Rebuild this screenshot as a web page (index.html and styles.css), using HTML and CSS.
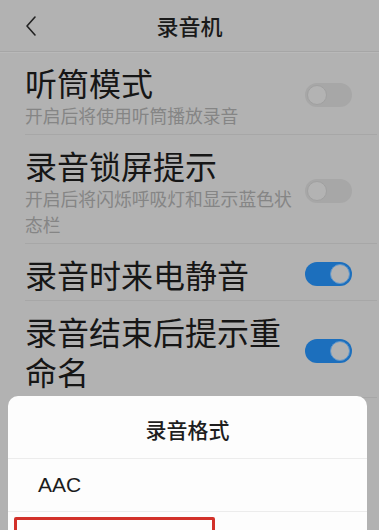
FILE: index.html
```html
<!DOCTYPE html>
<html lang="zh-CN">
<head>
<meta charset="utf-8">
<title>录音机</title>
<link rel="stylesheet" href="styles.css">
</head>
<body>
<div class="screen">
  <header class="topbar">
    <span class="back">
      <svg width="14" height="22" viewBox="0 0 14 22"><polyline points="10,2 2,11 10,20" fill="none" stroke="#222" stroke-width="1.6" stroke-linecap="round" stroke-linejoin="round"/></svg>
    </span>
    <h1 class="topbar-title">录音机</h1>
    <span></span>
  </header>
  <div class="list">
    <div class="row">
      <div class="text">
        <div class="title">听筒模式</div>
        <div class="sub">开启后将使用听筒播放录音</div>
      </div>
      <span class="switch"></span>
    </div>
    <div class="row">
      <div class="text">
        <div class="title">录音锁屏提示</div>
        <div class="sub">开启后将闪烁呼吸灯和显示蓝色状态栏</div>
      </div>
      <span class="switch"></span>
    </div>
    <div class="row">
      <div class="text">
        <div class="title">录音时来电静音</div>
      </div>
      <span class="switch on"></span>
    </div>
    <div class="row">
      <div class="text">
        <div class="title">录音结束后提示重命名</div>
      </div>
      <span class="switch on"></span>
    </div>
  </div>
  <div class="sheet">
    <div class="sheet-title">录音格式</div>
    <div class="opt">AAC</div>
    <div class="opt"></div>
    <div class="mark"></div>
  </div>
</div>
</body>
</html>
```
FILE: styles.css
```css
html, body {
  margin: 0;
  padding: 0;
  height: 530px;
  overflow: hidden;
}
body {
  background: #b2b2b2;
  font-family: "Noto Sans CJK SC", "Noto Sans", sans-serif;
  color: #181818;
}
.screen {
  position: relative;
  height: 530px;
  overflow: hidden;
}
.topbar {
  height: 51px;
  display: grid;
  grid-template-columns: 1fr auto 1fr;
  align-items: center;
  border-bottom: 1px solid #a6a6a6;
  box-shadow: 0 1px 0 #b9b9b9;
}
.back {
  display: flex;
  align-items: center;
  padding-left: 25px;
  padding-bottom: 2px;
}
.topbar-title {
  margin: 0;
  font-size: 22px;
  font-weight: 500;
  color: #1a1a1a;
  line-height: 51px;
  padding-bottom: 2px;
}
.list {
  display: flex;
  flex-direction: column;
}
.row {
  display: flex;
  align-items: center;
  margin-left: 25px;
  margin-right: 2px;
  padding: 10px 25px 6px 0;
  border-bottom: 1px solid #a7a7a7;
}
.text {
  flex: 1;
  min-width: 0;
}
.title {
  font-size: 32px;
  line-height: 40px;
  color: #161616;
}
.sub {
  font-size: 17.8px;
  line-height: 26px;
  color: #858585;
}
.switch {
  position: relative;
  flex: none;
  width: 47px;
  height: 24px;
  border-radius: 12px;
  background: #a7a7a7;
}
.switch::after {
  content: "";
  position: absolute;
  left: 2px;
  top: 2px;
  width: 18px;
  height: 18px;
  border-radius: 50%;
  background: #b3b3b3;
  border: 1px solid #a0a0a0;
}
.switch.on {
  background: #1c6fbd;
}
.switch.on::after {
  left: auto;
  right: 2px;
  background: #b2b2b2;
  border: 1px solid #5c95cc;
}
.sheet {
  position: absolute;
  left: 8px;
  top: 396px;
  width: 359px;
  height: 220px;
  background: #fdfdfd;
  border-radius: 10px;
}
.sheet-title {
  box-sizing: border-box;
  height: 63px;
  padding-top: 6px;
  line-height: 55px;
  text-align: center;
  font-size: 21px;
  font-weight: 500;
  color: #1e1e1e;
  border-bottom: 1px solid #ececec;
}
.opt {
  height: 52px;
  line-height: 52px;
  padding-left: 30px;
  font-family: "Liberation Sans", Arial, sans-serif;
  font-size: 21px;
  color: #1c1c1c;
  border-bottom: 1px solid #ececec;
}
.mark {
  position: absolute;
  left: 6px;
  top: 121px;
  width: 195px;
  height: 60px;
  border: 3px solid #d2312a;
  border-radius: 2px;
}
```
